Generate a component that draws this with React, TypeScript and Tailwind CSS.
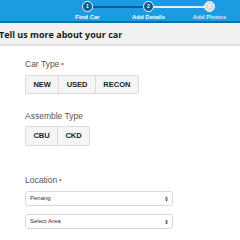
import React from "react";

function Step({ n, label, state }: { n: number; label: string; state: "done" | "todo" }) {
  return (
    <div className="flex w-[62px] flex-col items-center">
      <div
        className={
          state === "done"
            ? "z-10 flex h-[11px] w-[11px] items-center justify-center rounded-full border border-white bg-[#0b5d91] text-[5px] font-bold leading-none text-white"
            : "z-10 flex h-[11px] w-[11px] items-center justify-center rounded-full border border-white bg-[#d9d9d9] text-[5px] font-bold leading-none text-white"
        }
      >
        {n}
      </div>
      <div
        className={
          state === "done"
            ? "mt-[2px] text-[6px] font-bold leading-none text-white"
            : "mt-[2px] text-[6px] font-bold leading-none text-[#d6ecfa]"
        }
      >
        {label}
      </div>
    </div>
  );
}

function SegBtn({ children, w, last }: { children: React.ReactNode; w: string; last?: boolean }) {
  return (
    <div
      className={`flex h-full items-center justify-center text-[7.5px] font-bold text-[#222] ${w} ${
        last ? "" : "border-r border-[#dcdcdc]"
      }`}
    >
      {children}
    </div>
  );
}

function Select({ text }: { text: string }) {
  return (
    <div className="flex h-[15px] w-[148px] items-center justify-between rounded-[3px] border border-[#d8d8d8] bg-white pl-[4px] pr-[4px] text-[6px] text-[#333]">
      <span>{text}</span>
      <svg width="3" height="6" viewBox="0 0 3 6">
        <path d="M0 2.4 L1.5 0.6 L3 2.4Z M0 3.6 L1.5 5.4 L3 3.6Z" fill="#444" />
      </svg>
    </div>
  );
}

export default function App() {
  return (
    <div className="h-[240px] w-[240px] overflow-hidden bg-white" style={{ fontFamily: "'Liberation Sans', Arial, sans-serif" }}>
      <div className="relative h-[23px] border-b-2 border-[#0d6eab] bg-[#1b9be2]">
        <div className="absolute left-[88px] top-[6px] h-[1.5px] w-[62px] bg-[#0b5d91]" />
        <div className="absolute left-[150px] top-[6px] h-[1.5px] w-[63px] bg-[#dceefa]" />
        <div className="flex pl-[57px] pt-[1px]">
          <Step n={1} label="Find Car" state="done" />
          <Step n={2} label="Add Details" state="done" />
          <Step n={3} label="Add Photos" state="todo" />
        </div>
      </div>
      <div className="flex h-[23px] items-center border-b-2 border-[#e2e2e2] bg-[#f1f1f1] pt-[2px]">
        <div className="ml-[-1px] text-[9px] font-bold text-[#1a1a1a]" style={{ fontFamily: "'Open Sans', sans-serif" }}>
          Tell us more about your car
        </div>
      </div>
      <div className="flex flex-col pl-[25px] text-[#555]" style={{ fontFamily: "'Liberation Sans', Arial, sans-serif" }}>
        <div className="mt-[13px] flex h-[10px] items-center text-[8.5px]">
          Car Type<span className="ml-[2px] text-[7px] text-[#e0334a]">•</span>
        </div>
        <div className="mt-[6px] flex h-[19px] w-[114px] overflow-hidden rounded-[2px] border border-[#dcdcdc] bg-[#f5f5f5]">
          <SegBtn w="w-[34px]">NEW</SegBtn>
          <SegBtn w="w-[37px]">USED</SegBtn>
          <SegBtn w="w-[43px]" last>
            RECON
          </SegBtn>
        </div>
        <div className="mt-[17px] flex h-[10px] items-center text-[8.5px]">Assemble Type</div>
        <div className="mt-[5px] flex h-[20px] w-[65px] overflow-hidden rounded-[2px] border border-[#dcdcdc] bg-[#f5f5f5]">
          <SegBtn w="w-[33px]">CBU</SegBtn>
          <SegBtn w="w-[32px]" last>
            CKD
          </SegBtn>
        </div>
        <div className="mt-[29px] flex h-[10px] items-center text-[8.5px]">
          Location<span className="ml-[2px] text-[7px] text-[#e0334a]">•</span>
        </div>
        <div className="mt-[6px]">
          <Select text="Penang" />
        </div>
        <div className="mt-[8px]">
          <Select text="Select Area" />
        </div>
      </div>
    </div>
  );
}
